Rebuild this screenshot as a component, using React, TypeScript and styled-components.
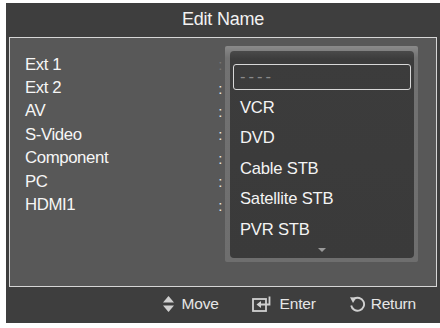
import React from "react";
import styled, { createGlobalStyle } from "styled-components";

const Global = createGlobalStyle`
  html, body { margin: 0; padding: 0; background: #ffffff; }
  body { font-family: "Liberation Sans", Arial, sans-serif; }
`;

const Panel = styled.div`
  width: 434px;
  height: 320px;
  margin: 3px 0 0 6px;
  background: #3e3e3e;
  display: flex;
  flex-direction: column;
  padding: 0 3px;
  box-sizing: border-box;
`;

const TitleBar = styled.div`
  height: 34px;
  display: flex;
  align-items: center;
  justify-content: center;
  color: #f2f2f2;
  font-size: 18px;
  letter-spacing: -0.2px;
  padding-bottom: 2px;
  box-sizing: border-box;
`;

const Frame = styled.div`
  position: relative;
  height: 250px;
  border: 1px solid #d6d6d6;
  background: #585858;
  box-sizing: border-box;
`;

const LabelList = styled.div`
  display: flex;
  flex-direction: column;
  padding: 15px 0 0 15px;
  width: 212px;
  box-sizing: border-box;
`;

const Row = styled.div`
  height: 23.4px;
  display: flex;
  align-items: center;
  justify-content: space-between;
  color: #f6f6f6;
  font-size: 16.8px;
  letter-spacing: -0.4px;
`;

const Colon = styled.span<{ $dim?: boolean }>`
  color: ${(p) => (p.$dim ? "#777" : "#e8e8e8")};
  font-size: 15px;
`;

const Dropdown = styled.div`
  position: absolute;
  left: 215px;
  top: 8px;
  width: 193px;
  height: 216px;
  box-sizing: border-box;
  padding: 5px 4px 4px 5px;
  background: linear-gradient(#8a8a8a, #727272 12px, #6e6e6e);
  border-radius: 2px;
`;

const DropInner = styled.div`
  height: 100%;
  background: linear-gradient(#4a4a4a, #3c3c3c 8px, #3a3a3a);
  border-radius: 4px;
  display: flex;
  flex-direction: column;
  padding-top: 11px;
  box-sizing: border-box;
  position: relative;
`;

const Item = styled.div<{ $selected?: boolean }>`
  height: 26px;
  margin: 2.25px 3px;
  display: flex;
  align-items: center;
  padding-left: 6px;
  box-sizing: border-box;
  border-radius: 3px;
  border: 1.5px solid ${(p) => (p.$selected ? "#d8d8d8" : "transparent")};
  color: ${(p) => (p.$selected ? "#8a8a8a" : "#f4f4f4")};
  font-size: 16.6px;
  letter-spacing: ${(p) => (p.$selected ? "3px" : "-0.2px")};
`;

const MoreArrow = styled.div`
  position: absolute;
  left: 50%;
  bottom: 6px;
  margin-left: -4px;
  width: 0;
  height: 0;
  border-left: 4.5px solid transparent;
  border-right: 4.5px solid transparent;
  border-top: 4px solid #9a9a9a;
`;

const Footer = styled.div`
  height: 36px;
  display: flex;
  align-items: center;
  justify-content: flex-end;
  gap: 33px;
  padding-right: 21px;
  padding-bottom: 2px;
  box-sizing: border-box;
  color: #e6e6e6;
  font-size: 15.5px;
  letter-spacing: -0.2px;
`;

const Hint = styled.div<{ $gap: number }>`
  display: flex;
  align-items: center;
  gap: ${(p) => p.$gap}px;
`;

const MoveIcon = () => (
  <svg width="11" height="16" viewBox="0 0 11 16">
    <path d="M5.5 0 L11 6.5 H0 Z" fill="#d0d0d0" />
    <path d="M5.5 16 L11 9.5 H0 Z" fill="#d0d0d0" />
  </svg>
);

const EnterIcon = () => (
  <svg width="21" height="16" viewBox="0 0 21 16">
    <rect x="1" y="3" width="13" height="12" fill="none" stroke="#d0d0d0" strokeWidth="1.8" />
    <path d="M17.5 0.5 V8.5 H8" fill="none" stroke="#d0d0d0" strokeWidth="1.8" />
    <path d="M4.5 8.5 L9 5 V12 Z" fill="#d0d0d0" />
  </svg>
);

const ReturnIcon = () => (
  <svg width="17" height="16" viewBox="0 0 17 16">
    <path d="M5 2.8 A6.5 6.5 0 1 1 2.2 9.5" fill="none" stroke="#d0d0d0" strokeWidth="1.9" />
    <path d="M1 1.2 L7.5 1.5 L4 7 Z" fill="#d0d0d0" />
  </svg>
);

const labels = ["Ext 1", "Ext 2", "AV", "S-Video", "Component", "PC", "HDMI1"];
const options = ["----", "VCR", "DVD", "Cable STB", "Satellite STB", "PVR STB"];

export default function App() {
  return (
    <>
      <Global />
      <Panel>
        <TitleBar>Edit Name</TitleBar>
        <Frame>
          <LabelList>
            {labels.map((l, i) => (
              <Row key={l}>
                <span>{l}</span>
                <Colon $dim={i === 0}>:</Colon>
              </Row>
            ))}
          </LabelList>
          <Dropdown>
            <DropInner>
              {options.map((o, i) => (
                <Item key={o} $selected={i === 0}>
                  {o}
                </Item>
              ))}
              <MoreArrow />
            </DropInner>
          </Dropdown>
        </Frame>
        <Footer>
          <Hint $gap={8}>
            <MoveIcon />
            <span>Move</span>
          </Hint>
          <Hint $gap={7}>
            <EnterIcon />
            <span>Enter</span>
          </Hint>
          <Hint $gap={5}>
            <ReturnIcon />
            <span>Return</span>
          </Hint>
        </Footer>
      </Panel>
    </>
  );
}
